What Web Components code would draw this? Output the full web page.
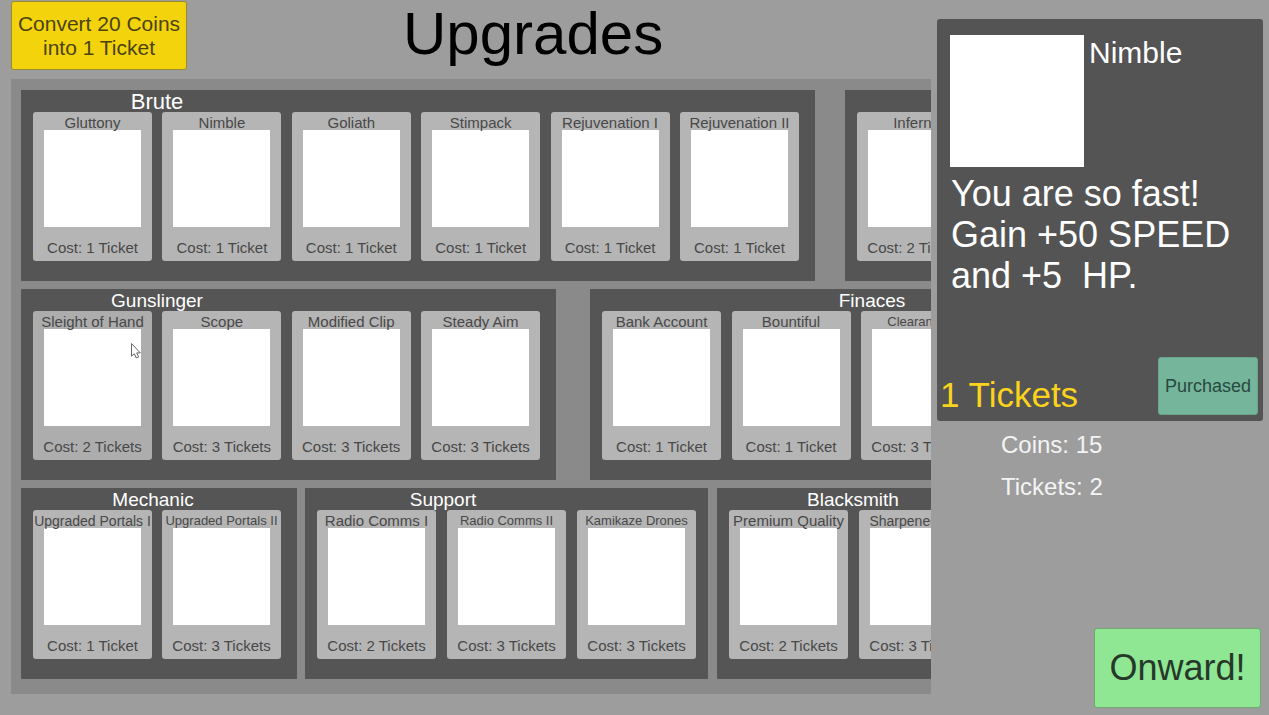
<!DOCTYPE html>
<html lang="en">
<head>
<meta charset="utf-8">
<title>Upgrades</title>
<style>
  html, body { margin: 0; }
  body { background: #9d9d9d; font-family: "Liberation Sans", Arial, sans-serif; color: #fff; }
</style>
</head>
<body>
<upgrade-shop></upgrade-shop>

<template id="t-shop">
  <style>
    :host { display: grid; grid-template-columns: minmax(0, 1fr) 338px; min-height: 100vh; position: relative; overflow: hidden; }
    main { padding: 0 0 21px 11px; }
    header { display: flex; align-items: flex-start; gap: 216px; height: 79px; }
    header game-button { margin-top: 1px; width: 176px; height: 69px; font-size: 21px; line-height: 24px; --face: #f3d30c; --ink: #4b430f; --edge: #9c8b2c; }
    h1 { margin: 0; font-size: 60px; line-height: 67px; font-weight: 400; color: #000; }
    .board { background: #8a8a8a; padding: 11px 0 15px 10px; display: grid; gap: 8px; overflow: hidden; }
    .row { display: flex; }
    aside { padding: 19px 6px 7px; display: flex; flex-direction: column; }
    .onward { margin: auto 2px 0 auto; width: 167px; height: 80px; font-size: 36px; line-height: 40px; --face: #8fe693; --ink: #26382a; --edge: #6fa873; }
    .purse { margin: 3px 0 0 64px; font-size: 24px; line-height: 42px; color: #f4f4f4; }
    .purse p { margin: 0; }
    svg { position: absolute; left: 130px; top: 342px; z-index: 3; pointer-events: none; }
  </style>
  <main>
    <header>
      <game-button>Convert 20 Coins<br>into 1 Ticket</game-button>
      <h1>Upgrades</h1>
    </header>
    <div class="board">
      <div class="row" id="r1"></div>
      <div class="row" id="r2"></div>
      <div class="row" id="r3"></div>
    </div>
  </main>
  <aside>
    <upgrade-detail>
      <span slot="name">Nimble</span>
      <span slot="text">You are so fast!<br>Gain +50 SPEED<br>and +5&nbsp; HP.</span>
      <span slot="price">1 Tickets</span>
      <span slot="action">Purchased</span>
    </upgrade-detail>
    <div class="purse"><p>Coins: 15</p><p>Tickets: 2</p></div>
    <game-button class="onward">Onward!</game-button>
  </aside>
  <svg width="12" height="18" viewBox="0 0 12 18" aria-hidden="true"><path d="M1.500 1.500V14.200L4.300 11.700L6.300 16L8.600 15L6.700 10.900H10.300Z" fill="#fff" stroke="#666" stroke-width="1"/></svg>
</template>

<template id="t-button">
  <style>
    :host { display: block; }
    button { box-sizing: border-box; width: 100%; height: 100%; margin: 0; padding: 0; border: 1px solid var(--edge); border-radius: 3px; background: var(--face); color: var(--ink); font: inherit; white-space: nowrap; }
  </style>
  <button type="button"><slot></slot></button>
</template>

<template id="t-detail">
  <style>
    :host { display: flex; flex-direction: column; min-height: 402px; background: #545454; border-radius: 3px; box-sizing: border-box; padding: 16px 5px 6px 3px; }
    .top { display: flex; gap: 5px; padding-left: 10px; }
    .pic { width: 134px; height: 132px; background: #fff; }
    h2 { margin: 0; font-size: 30px; line-height: 36px; font-weight: 400; }
    p { margin: 6px 0 0 11px; font-size: 36px; line-height: 41px; }
    .foot { margin-top: auto; display: flex; justify-content: space-between; align-items: flex-end; }
    .price { color: #fbd31c; font-size: 35px; line-height: 40px; }
    game-button { width: 100px; height: 58px; font-size: 18px; --face: #74b59b; --ink: #28483e; --edge: #69a58d; }
  </style>
  <div class="top"><div class="pic"></div><h2><slot name="name"></slot></h2></div>
  <p><slot name="text"></slot></p>
  <div class="foot"><span class="price"><slot name="price"></slot></span><game-button><slot name="action"></slot></game-button></div>
</template>

<template id="t-group">
  <style>
    :host { display: block; flex: none; box-sizing: border-box; height: 191px; background: #555; padding: 0 16px 20px 12px; }
    h2 { margin: 0 -12px; height: 22px; font-size: var(--title-size, 19px); line-height: 24px; font-weight: 400; text-align: center; width: var(--title-span, 272px); position: relative; z-index: 1; }
    .cards { display: flex; justify-content: space-between; }
  </style>
  <h2></h2>
  <div class="cards"><slot></slot></div>
</template>

<template id="t-card">
  <style>
    :host { display: block; flex: none; width: 119px; height: 149px; }
    button { box-sizing: border-box; width: 100%; height: 100%; margin: 0; border: 0; border-radius: 3px; padding: 2px 0 5px; background: var(--card, #b5b5b5); color: #484848; font: inherit; font-size: 15px; line-height: 16px; display: flex; flex-direction: column; align-items: center; white-space: nowrap; }
    .name { height: 16px; line-height: 18px; font-size: var(--name-size, 15px); position: relative; z-index: 1; }
    .pic { width: 97px; height: 97px; background: #fff; margin-bottom: 13px; }
  </style>
  <button type="button"><span class="name"></span><span class="pic"></span><span class="cost"></span></button>
</template>

<script>
  const stamp = (el, id) => {
    const root = el.attachShadow({ mode: 'open' });
    root.append(document.getElementById(id).content.cloneNode(true));
    return root;
  };

  customElements.define('game-button', class extends HTMLElement {
    constructor() { super(); stamp(this, 't-button'); }
  });

  customElements.define('upgrade-detail', class extends HTMLElement {
    constructor() { super(); stamp(this, 't-detail'); }
  });

  customElements.define('upgrade-card', class extends HTMLElement {
    connectedCallback() {
      if (this.shadowRoot) return;
      const root = stamp(this, 't-card');
      const n = Number(this.getAttribute('cost'));
      root.querySelector('.name').textContent = this.getAttribute('name');
      root.querySelector('.cost').textContent = `Cost: ${n} Ticket${n > 1 ? 's' : ''}`;
    }
  });

  customElements.define('upgrade-group', class extends HTMLElement {
    connectedCallback() {
      if (this.shadowRoot) return;
      stamp(this, 't-group').querySelector('h2').textContent = this.getAttribute('name');
    }
  });

  // Each group: name, style, then cards as [name, cost, style].
  const rows = {
    r1: [
      ['Brute', 'width:794px;margin-right:30px;--title-size:22px', [['Gluttony', 1], ['Nimble', 1], ['Goliath', 1], ['Stimpack', 1], ['Rejuvenation I', 1], ['Rejuvenation II', 1]]],
      ['', 'width:147px', [['Inferno', 2]]]
    ],
    r2: [
      ['Gunslinger', 'width:535px;margin-right:34px', [['Sleight of Hand', 2, '--card:#adadad'], ['Scope', 3], ['Modified Clip', 3], ['Steady Aim', 3]]],
      ['Finaces', 'width:406px;--title-span:564px', [['Bank Account', 1], ['Bountiful', 1], ['Clearance I', 3, '--name-size:13px']]]
    ],
    r3: [
      ['Mechanic', 'width:276px;margin-right:8px;--title-span:264px', [['Upgraded Portals I', 1, '--name-size:14px'], ['Upgraded Portals II', 3, '--name-size:13px']]],
      ['Support', 'width:403px;margin-right:9px;padding-right:12px;--title-span:276px', [['Radio Comms I', 2], ['Radio Comms II', 3, '--name-size:13px'], ['Kamikaze Drones', 3, '--name-size:13px']]],
      ['Blacksmith', 'width:277px', [['Premium Quality', 2], ['Sharpened Tips', 3, '--name-size:14px']]]
    ]
  };

  customElements.define('upgrade-shop', class extends HTMLElement {
    constructor() {
      super();
      const root = stamp(this, 't-shop');
      for (const [id, groups] of Object.entries(rows)) {
        for (const [name, style, cards] of groups) {
          const group = document.createElement('upgrade-group');
          group.setAttribute('name', name);
          group.style.cssText = style;
          for (const [title, cost, cardStyle] of cards) {
            const card = document.createElement('upgrade-card');
            card.setAttribute('name', title);
            card.setAttribute('cost', cost);
            if (cardStyle) card.style.cssText = cardStyle;
            group.append(card);
          }
          root.getElementById(id).append(group);
        }
      }
    }
  });
</script>
</body>
</html>
